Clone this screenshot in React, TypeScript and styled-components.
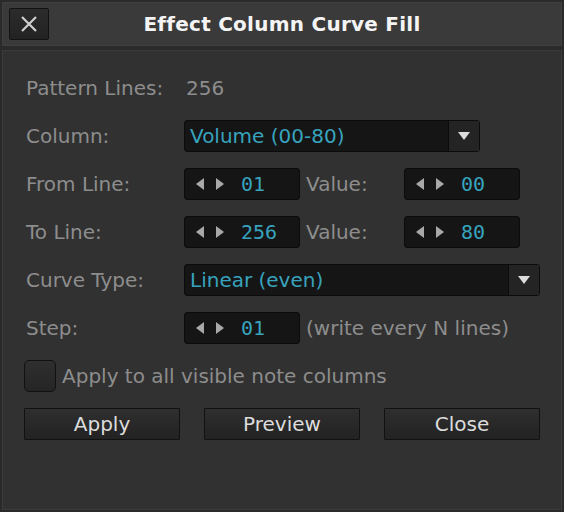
import React from 'react'
import styled, { createGlobalStyle } from 'styled-components'

const Global = createGlobalStyle`
  html, body {
    margin: 0;
    padding: 0;
    background: #2a2a2a;
  }
  * {
    box-sizing: border-box;
  }
`

const Window = styled.div`
  width: 564px;
  height: 512px;
  padding: 2px;
  display: flex;
  flex-direction: column;
  gap: 4px;
  background: #2a2a2a;
  font-family: 'DejaVu Sans', 'Liberation Sans', sans-serif;
  font-size: 20px;
`

const TitleBar = styled.div`
  height: 44px;
  flex: none;
  display: grid;
  grid-template-columns: 40px 1fr 40px;
  align-items: center;
  padding: 0 6px;
  background: #3a3a3a;
  border: 1px solid #3f3f3f;
`

const CloseButton = styled.button`
  width: 40px;
  height: 32px;
  padding: 0;
  display: flex;
  align-items: center;
  justify-content: center;
  background: linear-gradient(#2c2c2c, #222);
  border: 1px solid #121212;
  border-radius: 2px;
  cursor: pointer;
`

const Title = styled.div`
  text-align: center;
  font-weight: bold;
  letter-spacing: 0.25px;
  color: #f4f4f4;
`

const Body = styled.div`
  flex: 1;
  background: #313131;
  border: 1px solid #3b3b3b;
  padding: 21px 21px 0;
  display: flex;
  flex-direction: column;
  gap: 16px;
`

const Row = styled.div`
  height: 32px;
  display: flex;
  align-items: center;
`

const Label = styled.span<{ $width?: number; $gap?: number }>`
  width: ${p => (p.$width ? `${p.$width}px` : 'auto')};
  flex: none;
  margin-left: ${p => p.$gap ?? 0}px;
  padding-left: ${p => (p.$width === 160 ? 2 : 0)}px;
  color: #8d8d8d;
  white-space: nowrap;
`

const PlainValue = styled.span`
  padding-left: 2px;
  color: #8d8d8d;
`

const Field = styled.div<{ $width: number }>`
  width: ${p => p.$width}px;
  height: 32px;
  flex: none;
  display: flex;
  align-items: center;
  background: #151515;
  border: 1px solid #0c0c0c;
  border-radius: 3px;
`

const SelectText = styled.span`
  flex: 1;
  padding-left: 5px;
  color: #38a3be;
`

const SelectArrow = styled.span`
  width: 31px;
  align-self: stretch;
  display: flex;
  align-items: center;
  justify-content: center;
  background: #242424;
  border-left: 1px solid #0c0c0c;
`

const Arrows = styled.span`
  display: flex;
  gap: 12px;
  margin-left: 11px;
  margin-right: 17px;
`

const Number = styled.span`
  font-family: 'DejaVu Sans Mono', 'Liberation Mono', monospace;
  color: #38a3be;
`

const Check = styled.span`
  width: 32px;
  height: 32px;
  flex: none;
  background: linear-gradient(#2f2f2f, #252525);
  border: 1px solid #111;
  border-radius: 5px;
`

const Buttons = styled.div`
  display: flex;
  gap: 24px;
`

const Button = styled.button`
  width: 156px;
  height: 32px;
  padding: 0;
  font: inherit;
  color: #dcdcdc;
  background: linear-gradient(#2f2f2f, #222);
  border: 1px solid #111;
  border-radius: 1px;
  cursor: pointer;
`

const Tri = ({ dir }: { dir: 'left' | 'right' | 'down' }) => {
  if (dir === 'down')
    return (
      <svg width="14" height="10" viewBox="0 0 14 10">
        <path d="M1 1 H13 L7 9 Z" fill="#dcdcdc" />
      </svg>
    )
  return (
    <svg width="8" height="12" viewBox="0 0 8 12">
      <path d={dir === 'left' ? 'M8 0 V12 L0 6 Z' : 'M0 0 V12 L8 6 Z'} fill="#a9a9a9" />
    </svg>
  )
}

const Select = ({ width, value }: { width: number; value: string }) => (
  <Field $width={width}>
    <SelectText>{value}</SelectText>
    <SelectArrow>
      <Tri dir="down" />
    </SelectArrow>
  </Field>
)

const Spin = ({ value }: { value: string }) => (
  <Field $width={116}>
    <Arrows>
      <Tri dir="left" />
      <Tri dir="right" />
    </Arrows>
    <Number>{value}</Number>
  </Field>
)

const App: React.FC = () => (
  <>
    <Global />
    <Window>
      <TitleBar>
        <CloseButton aria-label="Close">
          <svg width="18" height="18" viewBox="0 0 18 18">
            <path d="M2 2 L16 16 M16 2 L2 16" stroke="#cfcfcf" strokeWidth="2.2" />
          </svg>
        </CloseButton>
        <Title>Effect Column Curve Fill</Title>
        <span />
      </TitleBar>
      <Body>
        <Row>
          <Label $width={160}>Pattern Lines:</Label>
          <PlainValue>256</PlainValue>
        </Row>
        <Row>
          <Label $width={160}>Column:</Label>
          <Select width={296} value="Volume (00-80)" />
        </Row>
        <Row>
          <Label $width={160}>From Line:</Label>
          <Spin value="01" />
          <Label $width={98} $gap={6}>Value:</Label>
          <Spin value="00" />
        </Row>
        <Row>
          <Label $width={160}>To Line:</Label>
          <Spin value="256" />
          <Label $width={98} $gap={6}>Value:</Label>
          <Spin value="80" />
        </Row>
        <Row>
          <Label $width={160}>Curve Type:</Label>
          <Select width={356} value="Linear (even)" />
        </Row>
        <Row>
          <Label $width={160}>Step:</Label>
          <Spin value="01" />
          <Label $gap={6}>(write every N lines)</Label>
        </Row>
        <Row>
          <Check />
          <Label $gap={6}>Apply to all visible note columns</Label>
        </Row>
        <Buttons>
          <Button>Apply</Button>
          <Button>Preview</Button>
          <Button>Close</Button>
        </Buttons>
      </Body>
    </Window>
  </>
)

export default App
